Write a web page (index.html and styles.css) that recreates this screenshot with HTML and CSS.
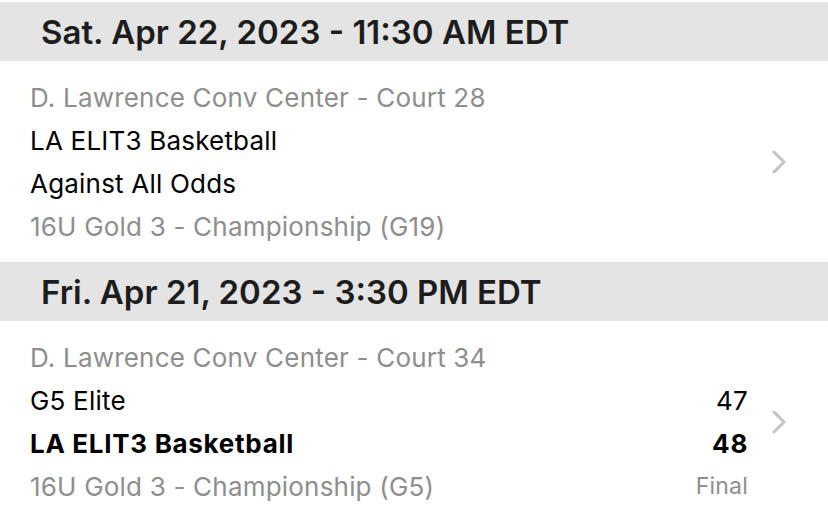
FILE: index.html
```html
<!DOCTYPE html>
<html>
<head>
<meta charset="utf-8">
<link rel="stylesheet" href="styles.css">
</head>
<body>
<div class="list">
  <section class="day">
    <div class="day-header">Sat. Apr 22, 2023 - 11:30 AM EDT</div>
    <div class="game">
      <div class="game-info">
        <div class="line muted">D. Lawrence Conv Center - Court 28</div>
        <div class="line">LA ELIT3 Basketball</div>
        <div class="line">Against All Odds</div>
        <div class="line muted">16U Gold 3 - Championship (G19)</div>
      </div>
      <svg class="chevron" viewBox="0 0 14 24" width="14" height="24"><path d="M2 2 L12 12 L2 22" fill="none" stroke="#c4c4c6" stroke-width="3" stroke-linecap="round" stroke-linejoin="round"/></svg>
    </div>
  </section>
  <section class="day">
    <div class="day-header">Fri. Apr 21, 2023 - 3:30 PM EDT</div>
    <div class="game">
      <div class="game-info">
        <div class="line muted">D. Lawrence Conv Center - Court 34</div>
        <div class="line team"><span>G5 Elite</span><span class="score">47</span></div>
        <div class="line team winner"><span>LA ELIT3 Basketball</span><span class="score">48</span></div>
        <div class="line team muted"><span>16U Gold 3 - Championship (G5)</span><span class="status">Final</span></div>
      </div>
      <svg class="chevron" viewBox="0 0 14 24" width="14" height="24"><path d="M2 2 L12 12 L2 22" fill="none" stroke="#c4c4c6" stroke-width="3" stroke-linecap="round" stroke-linejoin="round"/></svg>
    </div>
  </section>
</div>
</body>
</html>
```
FILE: styles.css
```css
html, body {
  margin: 0;
  padding: 0;
  background: #ffffff;
}
body {
  font-family: Inter, "Liberation Sans", Arial, sans-serif;
  color: #000;
  padding-top: 2px;
}
.day-header {
  background: #e4e4e4;
  height: 59px;
  display: flex;
  align-items: center;
  padding-left: 41px;
  font-size: 33px;
  font-weight: 600;
  color: #1d1d1d;
}
.game {
  display: flex;
  align-items: center;
  padding: 14px 42px 14px 30px;
  height: 173px;
}
.game-info {
  flex: 1;
  display: flex;
  flex-direction: column;
}
.line {
  font-size: 26px;
  line-height: 43px;
  height: 43px;
  white-space: nowrap;
  letter-spacing: 0.2px;
}
.muted {
  color: #8e8e8e;
}
.team {
  display: flex;
  justify-content: space-between;
}
.winner {
  font-weight: 700;
  letter-spacing: 0.7px;
}
.status {
  font-size: 23px;
  color: #8e8e8e;
  letter-spacing: 0.2px;
}
.chevron {
  margin-left: 24px;
  flex: none;
}
```
